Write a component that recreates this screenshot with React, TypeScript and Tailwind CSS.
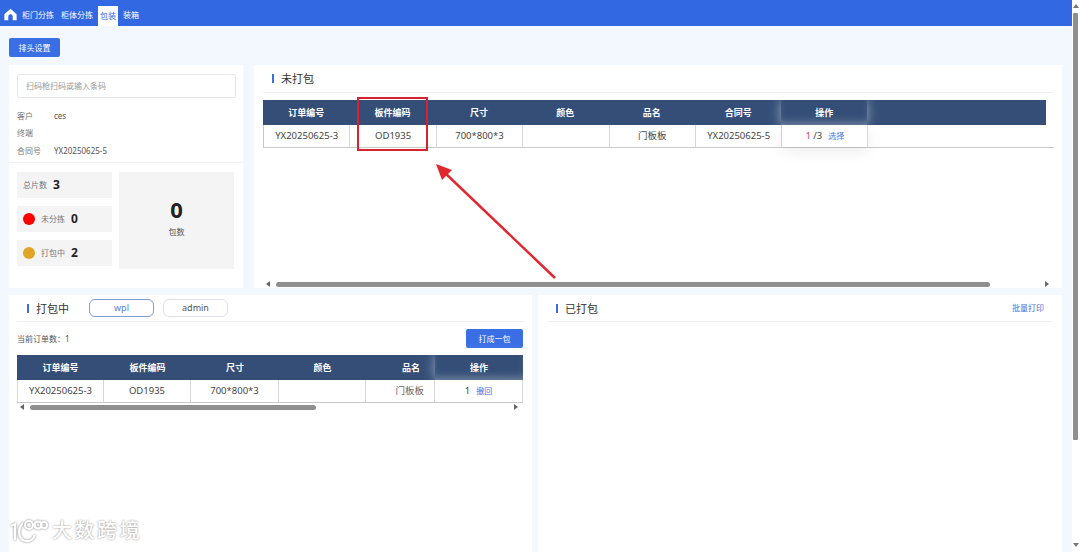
const topCols = ["订单编号", "板件编码", "尺寸", "颜色", "品名", "合同号"];
const topRow = ["YX20250625-3", "OD1935", "700*800*3", "", "门板板", "YX20250625-5"];

function SectionTitle({ title }: { title: string }) {
  return (
    <div className="flex items-center gap-[7px] text-[11px] leading-none text-[#333]">
      <span className="h-[9px] w-[2px] bg-[#3b6fe0]" />
      {title}
    </div>
  );
}

function ScrollBar({ thumbLeft, thumbWidth }: { thumbLeft: string; thumbWidth: string }) {
  return (
    <div className="flex h-[8px] items-center pl-[3px] pr-[5px]">
      <span className="h-0 w-0 border-y-[3px] border-r-[4px] border-y-transparent border-r-[#666]" />
      <div className={`h-[5px] rounded-full bg-[#8f8f8f] ${thumbLeft} ${thumbWidth}`} />
      <span className="ml-auto h-0 w-0 border-y-[3px] border-l-[4px] border-y-transparent border-l-[#666]" />
    </div>
  );
}

function Stat({ label, value, dot }: { label: string; value: string; dot?: string }) {
  return (
    <div className="flex h-[26px] items-center bg-[#f4f4f4] pl-[6px]">
      {dot && <span className={`mr-[6px] h-[12px] w-[12px] rounded-full ${dot}`} />}
      <span className="text-[8px] text-[#777]">{label}</span>
      <span className="ml-[6px] text-[12px] font-bold text-[#222]">{value}</span>
    </div>
  );
}

function InfoRow({ label, value }: { label: string; value?: string }) {
  return (
    <div className="flex h-[17.5px] items-center text-[8px] text-[#555]">
      <span className="w-[37px] text-[#777]">{label}</span>
      <span>{value}</span>
    </div>
  );
}

export default function App() {
  return (
    <div className="relative flex h-[552px] w-[1080px] overflow-hidden bg-[#f3f8fe] font-['Noto_Sans','Noto_Sans_CJK_SC',sans-serif]">
      <div className="flex w-[1072px] flex-col">
        {/* Top nav */}
        <div className="flex h-[26px] shrink-0 items-end bg-[#3269e3] pl-[4px] text-[8px] text-white">
          <svg viewBox="0 0 14 14" className="mb-[5px] h-[13px] w-[13px]" fill="#fff">
            <path d="M7 .8 13.6 6.6V13.200H9.400V9.200A2.400 2.400 0 0 0 4.600 9.200V13.200H.4V6.600Z" />
          </svg>
          <span className="mb-[5px] ml-[5px]">柜门分拣</span>
          <span className="mb-[5px] ml-[7px]">柜体分拣</span>
          <span className="ml-[5px] flex h-[20px] w-[20px] items-center justify-center bg-white text-[#3269e3]">包装</span>
          <span className="mb-[5px] ml-[5px]">装箱</span>
        </div>

        <div className="h-[39px] shrink-0 pl-[9px] pt-[12px]">
          <button className="block h-[19px] w-[51px] rounded-[2px] bg-[#3a6ee4] text-[8px] text-white">排头设置</button>
        </div>

        <div className="flex h-[223px] shrink-0 gap-[11px] pl-[9px] pr-[10px]">
          {/* Scan panel */}
          <div className="flex w-[234px] flex-col bg-white">
            <div className="pb-[2px] pl-[8px] pr-[7px] pt-[9px]">
              <div className="flex h-[24px] items-center rounded-[2px] border border-[#e4e7ed] pl-[8px] text-[8px] text-[#999]">
                扫码枪扫码或输入条码
              </div>
              <div className="mt-[9px]">
                <InfoRow label="客户" value="ces" />
                <InfoRow label="终端" />
                <InfoRow label="合同号" value="YX20250625-5" />
              </div>
            </div>
            <div className="flex gap-[7px] border-t border-[#f2f3f5] px-[8px] pt-[9px]">
              <div className="flex w-[95px] flex-col gap-[8px]">
                <Stat label="总片数" value="3" />
                <Stat label="未分拣" value="0" dot="bg-[#fe0000]" />
                <Stat label="打包中" value="2" dot="bg-[#dfa526]" />
              </div>
              <div className="flex h-[97px] w-[115px] flex-col items-center justify-center bg-[#f4f4f4] pb-[6px]">
                <span className="text-[22px] font-bold leading-[26px] text-[#222]">0</span>
                <span className="mt-[4px] text-[8px] text-[#555]">包数</span>
              </div>
            </div>
          </div>

          {/* Unpacked */}
          <div className="flex flex-1 flex-col bg-white pl-[9px] pr-[8px]">
            <div className="flex h-[28px] shrink-0 items-center border-b border-[#f0f0f0] pb-[1px] pl-[9px]">
              <SectionTitle title="未打包" />
            </div>
            <div className="mt-[7px] flex h-[25px] w-[783px] bg-[#344e77] text-[9px] font-bold text-white">
              {topCols.map((c) => (
                <div key={c} className="flex w-[86.4px] items-center justify-center">{c}</div>
              ))}
              <div className="flex w-[86px] items-center justify-center shadow-[0_0_12px_rgba(255,255,255,0.5),inset_0_-6px_8px_-4px_rgba(255,255,255,0.35)]">操作</div>
            </div>
            <div className="flex h-[23px] border-b border-l border-[#c8c8c8] text-[9.5px] text-[#444]">
              {topRow.map((c, i) => (
                <div key={i} className="flex w-[86.4px] items-center justify-center border-r border-[#d8d8d8]">{c}</div>
              ))}
              <div className="flex w-[86px] items-center justify-center gap-[6px] border-r border-[#d8d8d8] shadow-[0_4px_14px_rgba(0,0,0,0.08)]">
                <span><span className="text-[#e8384f]">1</span> /3</span>
                <span className="text-[8px] text-[#4a6fe0]">选择</span>
              </div>
            </div>
            <div className="mt-auto">
              <ScrollBar thumbLeft="ml-[6px]" thumbWidth="w-[714px]" />
            </div>
          </div>
        </div>

        <div className="mt-[7px] flex min-h-0 flex-1 gap-[6px] pl-[9px] pr-[10px]">
          {/* Packing */}
          <div className="flex w-[523px] flex-col bg-white px-[8px]">
            <div className="flex h-[27px] shrink-0 items-center border-b border-[#f0f0f0] pl-[10px]">
              <SectionTitle title="打包中" />
              <span className="ml-[20px] flex h-[18px] w-[65px] items-center justify-center rounded-[6px] border border-[#7d9fd8] text-[9px] text-[#5a82d8]">wpl</span>
              <span className="ml-[9px] flex h-[18px] w-[65px] items-center justify-center rounded-[6px] border border-[#dcdfe6] text-[9px] text-[#555]">admin</span>
            </div>
            <div className="flex h-[33px] w-[506px] shrink-0 items-center justify-between">
              <span className="text-[8px] text-[#555]">当前订单数：1</span>
              <button className="h-[19px] w-[57px] rounded-[2px] bg-[#3a6ee4] text-[8px] text-white">打成一包</button>
            </div>
            <div className="flex h-[25px] w-[506px] bg-[#344e77] text-[9px] font-bold text-white">
              <div className="flex w-[87px] items-center justify-center">订单编号</div>
              <div className="flex w-[87px] items-center justify-center">板件编码</div>
              <div className="flex w-[88px] items-center justify-center">尺寸</div>
              <div className="flex w-[87px] items-center justify-center">颜色</div>
              <div className="flex w-[69px] items-center justify-end pr-[15px]">品名</div>
              <div className="flex w-[88px] items-center justify-center shadow-[0_0_12px_rgba(255,255,255,0.5),inset_0_-6px_8px_-4px_rgba(255,255,255,0.35)]">操作</div>
            </div>
            <div className="flex h-[23px] w-[506px] border-b border-[#c8c8c8] text-[9.5px] text-[#444]">
              <div className="flex w-[87px] items-center justify-center border-x border-[#d8d8d8]">YX20250625-3</div>
              <div className="flex w-[87px] items-center justify-center border-r border-[#d8d8d8]">OD1935</div>
              <div className="flex w-[88px] items-center justify-center border-r border-[#d8d8d8]">700*800*3</div>
              <div className="w-[87px] border-r border-[#d8d8d8]" />
              <div className="flex w-[69px] items-center justify-end border-r border-[#d8d8d8] pr-[10px] text-[#666]">门板板</div>
              <div className="flex w-[88px] items-center justify-center gap-[6px] border-r border-[#d8d8d8]">
                <span>1</span>
                <span className="text-[8px] text-[#4a6fe0]">撤回</span>
              </div>
            </div>
            <div className="w-[506px]">
              <ScrollBar thumbLeft="ml-[6px]" thumbWidth="w-[286px]" />
            </div>
          </div>

          {/* Packed */}
          <div className="flex flex-1 flex-col bg-white px-[9px]">
            <div className="flex h-[27px] items-center justify-between border-b border-[#f0f0f0] pl-[9px] pr-[9px]">
              <SectionTitle title="已打包" />
              <span className="text-[8px] text-[#4a6fe0]">批量打印</span>
            </div>
          </div>
        </div>
      </div>

      {/* Page scrollbar */}
      <div className="flex w-[8px] flex-col items-center bg-white pr-[1px]">
        <span className="mt-[4px] h-0 w-0 border-x-[3px] border-b-[4px] border-x-transparent border-b-[#777]" />
        <div className="mt-[5px] h-[427px] w-[5px] rounded-[1px] bg-[#8f8f8f]" />
        <span className="mt-auto mb-[5px] h-0 w-0 border-x-[3px] border-t-[4px] border-x-transparent border-t-[#777]" />
      </div>

      {/* Red annotation box */}
      <div className="absolute left-[357px] top-[97px] h-[54px] w-[71px] border-[2px] border-[#d8232f]" />

      {/* Red annotation arrow */}
      <svg className="absolute left-[425px] top-[155px]" width="140" height="130" viewBox="425 155 140 130" fill="none">
        <path d="M555 278 444 172" stroke="#e1282f" strokeWidth="2.500" />
        <path d="M436 164 452 170 442 180Z" fill="#e1282f" />
      </svg>

      {/* Watermark */}
      <div className="absolute left-[10px] top-[518px] flex items-center gap-[4px] font-medium text-white [text-shadow:0_0_2px_rgba(0,0,0,0.5)]">
        <svg width="38" height="26" viewBox="0 0 38 26" fill="none" stroke="#fff" strokeWidth="2.200" style={{ filter: "drop-shadow(0 0 1px rgba(0,0,0,0.5))" }}>
          <path d="M1 8 5 6V22" />
          <path d="M13 5C7 11 8 22 16 23C21 23.500 24 20 25 17" />
          <circle cx="19" cy="7" r="4" />
          <circle cx="28" cy="7" r="3.500" />
          <circle cx="34" cy="7" r="3" />
        </svg>
        <span className="text-[20px] leading-none tracking-[2.500px]">大数跨境</span>
      </div>
    </div>
  );
}
